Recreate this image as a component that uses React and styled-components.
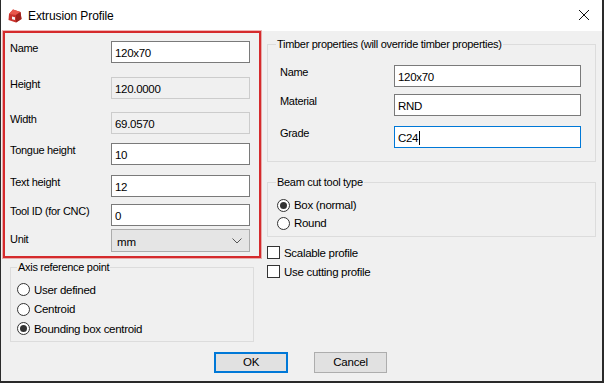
import React from "react";
import styled, { createGlobalStyle } from "styled-components";

const GlobalStyle = createGlobalStyle`
  html, body {
    margin: 0;
    padding: 0;
    background: #ffffff;
  }
  * {
    box-sizing: border-box;
  }
`;

const App = () => {
  return (
    <>
      <GlobalStyle />
      <Window>
        <TitleBar>
          <AppIcon />
          <Title>Extrusion Profile</Title>
          <CloseBtn aria-label="Close">
            <svg width="12" height="12" viewBox="0 0 12 12">
              <path d="M1 1 L11 11 M11 1 L1 11" stroke="#111" strokeWidth="1" fill="none" />
            </svg>
          </CloseBtn>
        </TitleBar>

        <Body>
          <LeftCol>
            <Highlight>
              <FormRow>
                <Label>Name</Label>
                <Field>120x70</Field>
              </FormRow>
              <FormRow $mt={14}>
                <Label>Height</Label>
                <Field $readOnly>120.0000</Field>
              </FormRow>
              <FormRow $mt={13}>
                <Label>Width</Label>
                <Field $readOnly>69.0570</Field>
              </FormRow>
              <FormRow $mt={9}>
                <Label>Tongue height</Label>
                <Field>10</Field>
              </FormRow>
              <FormRow $mt={10}>
                <Label>Text height</Label>
                <Field>12</Field>
              </FormRow>
              <FormRow $mt={7}>
                <Label>Tool ID (for CNC)</Label>
                <Field>0</Field>
              </FormRow>
              <FormRow $mt={3}>
                <Label $pt={4}>Unit</Label>
                <Select>
                  mm
                  <svg width="10" height="6" viewBox="0 0 10 6">
                    <path d="M0.5 0.5 L5 5 L9.5 0.5" stroke="#555" strokeWidth="1" fill="none" />
                  </svg>
                </Select>
              </FormRow>
            </Highlight>

            <AxisGroup>
              <Legend $ml={0}>Axis reference point</Legend>
              <Radio label="User defined" />
              <Radio label="Centroid" />
              <Radio label="Bounding box centroid" checked />
            </AxisGroup>
          </LeftCol>

          <RightCol>
            <TimberGroup>
              <Legend $ml={1}>Timber properties (will override timber properties)</Legend>
              <TimberRow>
                <Label>Name</Label>
                <Field>120x70</Field>
              </TimberRow>
              <TimberRow $mt={7}>
                <Label>Material</Label>
                <Field>RND</Field>
              </TimberRow>
              <TimberRow $mt={10}>
                <Label>Grade</Label>
                <Field $focused>
                  C24
                  <Caret />
                </Field>
              </TimberRow>
            </TimberGroup>

            <BeamGroup>
              <Legend $ml={-1}>Beam cut tool type</Legend>
              <Radio label="Box (normal)" checked $h={18} />
              <Radio label="Round" $h={18} />
            </BeamGroup>

            <Checks>
              <Check label="Scalable profile" />
              <Check label="Use cutting profile" />
            </Checks>
          </RightCol>
        </Body>

        <Buttons>
          <Button $primary>OK</Button>
          <Button>Cancel</Button>
        </Buttons>
      </Window>
    </>
  );
};

const Radio = ({ label, checked, $h }) => (
  <OptionRow $h={$h}>
    <RadioDot $checked={checked} />
    <span>{label}</span>
  </OptionRow>
);

const Check = ({ label }) => (
  <OptionRow $h={19}>
    <CheckBox />
    <span>{label}</span>
  </OptionRow>
);

const AppIcon = () => (
  <svg width="16" height="16" viewBox="0 0 16 16">
    <path d="M6 1.5 L13.5 4 L14.5 11 L9 14.5 L1.5 12 L2 6 Z" fill="#c9312b" />
    <path d="M6 1.5 L13.5 4 L9 7 L2 6 Z" fill="#e8574c" />
    <path d="M9 7 L13.5 4 L14.5 11 L9 14.5 Z" fill="#9e221d" />
    <path d="M5 8.5 L8 9.2 L8 12 L5 11.3 Z" fill="#f4f4f4" />
  </svg>
);

export default App;

const Window = styled.div`
  width: 604px;
  height: 383px;
  display: flex;
  flex-direction: column;
  background: #f0f0f0;
  border-left: 1px solid #2a2a2a;
  border-right: 2px solid #2a2a2a;
  border-bottom: 2px solid #2a2a2a;
  font-family: "Liberation Sans", Arial, sans-serif;
  font-size: 11px;
  color: #000;
  overflow: hidden;
`;

const TitleBar = styled.div`
  height: 31px;
  flex: none;
  background: #ffffff;
  display: flex;
  align-items: center;
  padding-left: 6px;
`;

const Title = styled.div`
  margin-left: 5px;
  font-size: 12px;
  color: #000;
  letter-spacing: -0.1px;
`;

const CloseBtn = styled.div`
  margin-left: auto;
  margin-right: 12px;
  width: 12px;
  height: 12px;
  display: flex;
  margin-top: -2px;
`;

const Body = styled.div`
  display: grid;
  grid-template-columns: 258px 1fr;
  column-gap: 6px;
  padding: 0 6px 0 2px;
`;

const LeftCol = styled.div`
  display: flex;
  flex-direction: column;
`;

const RightCol = styled.div`
  display: flex;
  flex-direction: column;
`;

const Highlight = styled.div`
  border: 2px solid #d52a2c;
  box-shadow: 0 0 0 1px rgba(213, 42, 44, 0.35);
  padding: 8px 6px 4px 0;
  height: 227px;
`;

const FormRow = styled.div`
  display: grid;
  grid-template-columns: 106px 139px;
  align-items: start;
  margin-top: ${(p) => p.$mt || 0}px;
`;

const TimberRow = styled.div`
  display: grid;
  grid-template-columns: 119px 187px;
  align-items: start;
  margin-top: ${(p) => p.$mt || 0}px;
`;

const Label = styled.div`
  padding-left: 5px;
  padding-top: ${(p) => (p.$pt != null ? p.$pt : 1)}px;
  line-height: 13px;
  letter-spacing: -0.3px;
  white-space: nowrap;
`;

const Field = styled.div`
  height: 22px;
  display: flex;
  align-items: center;
  padding: 1px 3px 0;
  background: ${(p) => (p.$readOnly ? "#f0f0f0" : "#ffffff")};
  border: 1px solid
    ${(p) => (p.$focused ? "#0078d7" : p.$readOnly ? "#cccccc" : "#7a7a7a")};
  font-size: 11.5px;
  letter-spacing: -0.3px;
  white-space: nowrap;
`;

const Caret = styled.span`
  display: inline-block;
  width: 1px;
  height: 14px;
  background: #000;
  margin-left: 1px;
`;

const Select = styled.div`
  height: 23px;
  display: flex;
  align-items: center;
  justify-content: space-between;
  padding: 2px 7px 0 5px;
  background: #e5e5e5;
  border: 1px solid #acacac;
  font-size: 11.5px;

  svg {
    margin-top: -1px;
  }
`;

const Group = styled.fieldset`
  margin: 0;
  border: 1px solid #dcdcdc;
  min-width: 0;
`;

const Legend = styled.legend`
  padding: 0 1px;
  margin-left: ${(p) => p.$ml || 0}px;
  line-height: 13px;
  letter-spacing: -0.3px;
  white-space: nowrap;
`;

const AxisGroup = styled(Group)`
  margin: 3px 0 0 7px;
  width: 244px;
  padding: 6px 0 2px 6px;
`;

const TimberGroup = styled(Group)`
  margin-top: 7px;
  padding: 14px 8px 13px 7px;
`;

const BeamGroup = styled(Group)`
  margin-top: 14px;
  padding: 7px 0 4px 9px;
`;

const Checks = styled.div`
  display: flex;
  flex-direction: column;
  margin-top: 6px;
`;

const OptionRow = styled.div`
  height: ${(p) => p.$h || 19.5}px;
  display: flex;
  align-items: center;
  gap: 4px;
  letter-spacing: -0.3px;
  font-size: 11.5px;
  white-space: nowrap;
`;

const RadioDot = styled.span`
  width: 13px;
  height: 13px;
  flex: none;
  border-radius: 50%;
  border: 1px solid #333;
  background: #fff;
  display: flex;
  align-items: center;
  justify-content: center;

  &::after {
    content: "";
    display: ${(p) => (p.$checked ? "block" : "none")};
    width: 7px;
    height: 7px;
    border-radius: 50%;
    background: #333;
  }
`;

const CheckBox = styled.span`
  width: 13px;
  height: 13px;
  flex: none;
  border: 1px solid #333;
  background: #fff;
`;

const Buttons = styled.div`
  display: flex;
  justify-content: center;
  gap: 26px;
  margin-top: 10px;
  padding-right: 2px;
`;

const Button = styled.div`
  width: ${(p) => (p.$primary ? 74 : 73)}px;
  height: 21px;
  display: flex;
  align-items: center;
  justify-content: center;
  background: #e1e1e1;
  border: ${(p) => (p.$primary ? "2px solid #0078d7" : "1px solid #adadad")};
  font-size: 11.5px;
  letter-spacing: -0.2px;
`;
